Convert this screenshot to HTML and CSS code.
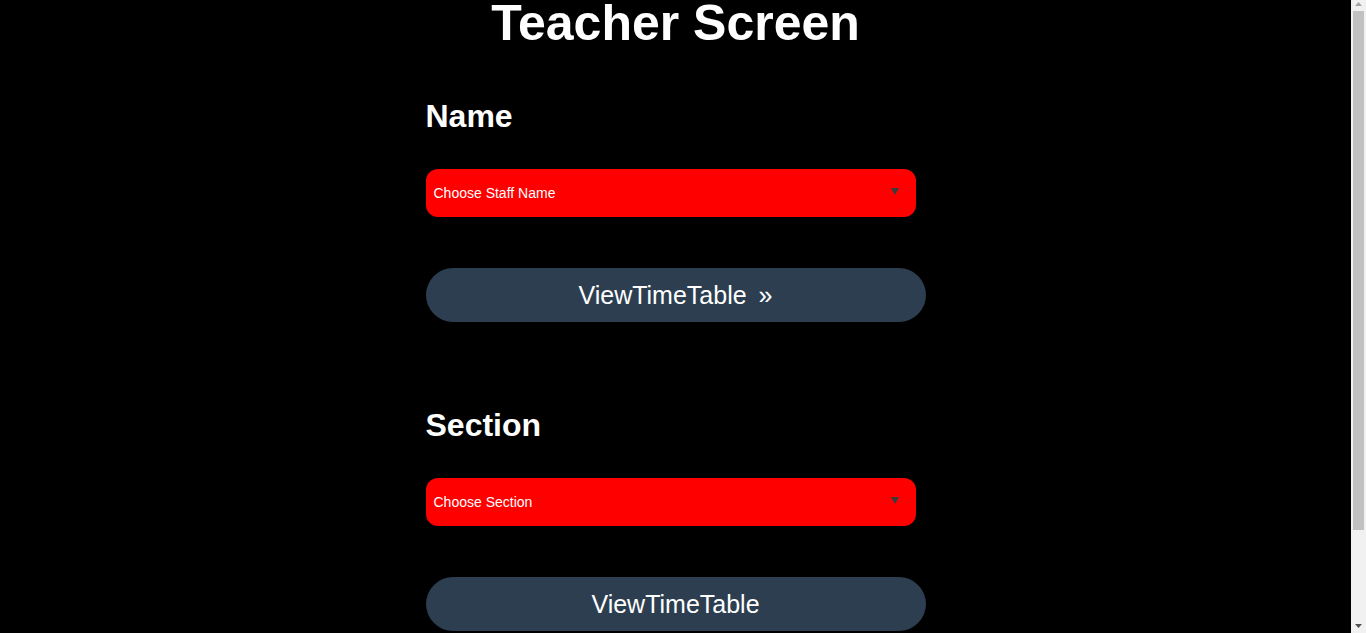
FILE: index.html
```html
<!DOCTYPE html>
<html lang="en">
<head>
<meta charset="utf-8">
<title>Teacher Screen</title>
<link rel="stylesheet" href="styles.css">
</head>
<body>
<div class="page">
  <div class="content">
    <h1 class="title">Teacher Screen</h1>
    <main class="panel">
      <section class="block">
        <h2 class="label">Name</h2>
        <div class="select" role="listbox">
          <span class="select-text">Choose Staff Name</span>
          <svg class="select-arrow" width="8" height="7" viewBox="0 0 8 7" aria-hidden="true"><path d="M0 0H8L4 7Z" fill="#3b3b3b"/></svg>
        </div>
        <button class="btn" type="button">ViewTimeTable<span class="btn-arrow">»</span></button>
      </section>
      <section class="block block-next">
        <h2 class="label">Section</h2>
        <div class="select" role="listbox">
          <span class="select-text">Choose Section</span>
          <svg class="select-arrow" width="8" height="7" viewBox="0 0 8 7" aria-hidden="true"><path d="M0 0H8L4 7Z" fill="#3b3b3b"/></svg>
        </div>
        <button class="btn" type="button">ViewTimeTable</button>
      </section>
    </main>
  </div>
  <aside class="scrollbar" aria-hidden="true">
    <div class="sb-up"><svg width="7" height="4" viewBox="0 0 7 4"><path d="M3.5 0L7 4H0Z" fill="#a3a3a3"/></svg></div>
    <div class="sb-thumb"></div>
    <div class="sb-space"></div>
    <div class="sb-down"><svg width="7" height="4" viewBox="0 0 7 4"><path d="M0 0H7L3.5 4Z" fill="#505050"/></svg></div>
  </aside>
</div>
</body>
</html>
```
FILE: styles.css
```css
html, body {
  margin: 0;
  padding: 0;
}

body {
  background: #000;
  color: #fff;
  font-family: "Liberation Sans", Arial, sans-serif;
}

.page {
  display: grid;
  grid-template-columns: 1fr 15px;
  align-items: start;
}

.content {
  padding-bottom: 104px;
}

.title {
  margin: 0;
  font-size: 50px;
  line-height: 46px;
  font-weight: bold;
  text-align: center;
  color: #fff;
}

.panel {
  width: 500px;
  margin: 0 auto;
  display: flex;
  flex-direction: column;
}

.block {
  display: flex;
  flex-direction: column;
  align-items: flex-start;
  margin-top: 53px;
}

.block-next {
  margin-top: 86px;
}

.label {
  margin: 0;
  font-size: 32px;
  line-height: 34px;
  font-weight: bold;
  color: #fff;
}

.select {
  margin-top: 36px;
  box-sizing: border-box;
  width: 490px;
  height: 48px;
  padding: 0 17px 0 8px;
  background: #ff0000;
  border-radius: 12px;
  display: flex;
  align-items: center;
  justify-content: space-between;
  font-size: 14px;
  color: #fff;
}

.select-arrow {
  display: block;
  margin-bottom: 4px;
}

.btn {
  margin-top: 51px;
  width: 500px;
  height: 54px;
  padding: 0;
  border: none;
  border-radius: 27px;
  background: #2c3e50;
  color: #fff;
  font-family: "Liberation Sans", Arial, sans-serif;
  font-size: 25px;
  line-height: 54px;
  text-align: center;
}

.btn-arrow {
  margin-left: 12px;
}

.scrollbar {
  position: sticky;
  top: 0;
  height: 100vh;
  background: #f1f1f1;
  display: flex;
  flex-direction: column;
  align-items: center;
}

.sb-up {
  height: 11px;
  padding-top: 2px;
  box-sizing: border-box;
  display: flex;
  justify-content: center;
}

.sb-up svg,
.sb-down svg {
  display: block;
}

.sb-thumb {
  width: 11px;
  height: 519px;
  background: #c1c1c1;
}

.sb-space {
  flex: 1;
}

.sb-down {
  height: 9px;
  display: flex;
  justify-content: center;
}
```
